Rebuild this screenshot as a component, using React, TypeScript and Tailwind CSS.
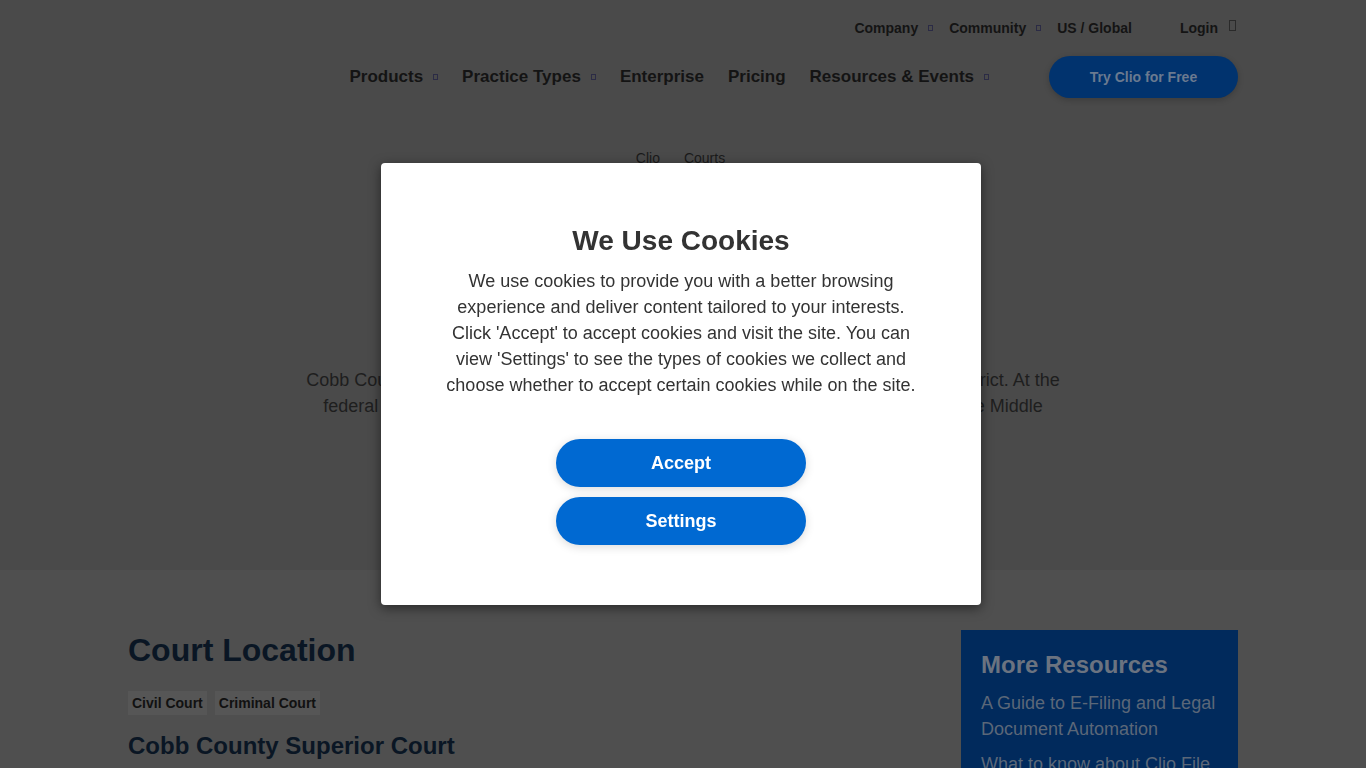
import React from "react";

const font = "font-['Liberation_Sans',Arial,sans-serif]";

function Caret() {
  // missing icon-font glyph, shown as a tiny box
  return <span className="ml-[10px] inline-block h-[6px] w-[5px] border border-[#2b2b45]" />;
}

const mainNav = [
  { label: "Products", caret: true },
  { label: "Practice Types", caret: true },
  { label: "Enterprise", caret: false },
  { label: "Pricing", caret: false },
  { label: "Resources & Events", caret: true },
];

export default function App() {
  return (
    <div className={`${font} min-h-screen bg-[#4f4f4f] text-[#141414]`}>
      {/* Header + hero */}
      <div className="bg-[#4a4a4a]">
        <header className="mx-auto w-[1110px]">
          <div className="flex h-[56px] items-center justify-end text-[14px] font-bold">
            <span className="flex items-center">Company<Caret /></span>
            <span className="ml-[16px] flex items-center">Community<Caret /></span>
            <span className="ml-[16px]">US / Global</span>
            <span className="ml-[48px] mr-[2px] flex items-center">
              Login
              <span className="ml-[11px] mb-[6px] inline-block h-[11px] w-[7px] border border-[#2a2a2a]" />
            </span>
          </div>
          <div className="flex h-[42px] items-center justify-end text-[17px] font-bold">
            <nav className="flex items-center gap-6">
              {mainNav.map((n) => (
                <span key={n.label} className="flex items-center">
                  {n.label}
                  {n.caret && <Caret />}
                </span>
              ))}
            </nav>
            <button className="ml-[60px] h-[42px] w-[189px] rounded-full bg-[#01336e] text-[14px] font-bold text-[#6a7a90] shadow-[0_2px_6px_rgba(0,0,0,0.2)]">
              Try Clio for Free
            </button>
          </div>
        </header>

        <section className="mx-auto w-[760px] pb-[151px] pt-[51px] text-center">
          <div className="mr-[5px] flex justify-center gap-[24px] text-[14px] leading-[18px] text-[#1a1a1a]">
            <span>Clio</span>
            <span>Courts</span>
          </div>
          <h1 className="mt-[90px] text-[40px] font-bold leading-[48px] text-[#141414]">Cobb County Courts</h1>
          <p className="mt-[62px] text-[18px] leading-[26px] text-[#1e1e1e]">
            Cobb County courts operate at the state level as part of the Cobb Judicial Circuit district. At the
            <br />
            federal level, Cobb County cases are held in the United States District Court for the Middle
          </p>
        </section>
      </div>

      {/* Court location */}
      <main className="mx-auto flex w-[1110px] justify-between pt-[60px]">
        <div>
          <h2 className="text-[32px] font-bold leading-[40px] text-[#0a1624]">Court Location</h2>
          <div className="mt-[21px] flex gap-2">
            {["Civil Court", "Criminal Court"].map((t) => (
              <span key={t} className="h-[24px] bg-[#565656] px-[4px] text-[14px] font-bold leading-[24px] text-[#111]">
                {t}
              </span>
            ))}
          </div>
          <h3 className="mt-[16px] text-[24px] font-bold leading-[30px] text-[#0a1624]">Cobb County Superior Court</h3>
        </div>
        <aside className="h-[200px] w-[277px] bg-[#012a5c] px-[20px] pt-[20px]">
          <h4 className="text-[24px] font-bold leading-[30px] text-[#6b7380]">More Resources</h4>
          <ul className="mt-[10px] space-y-[9px] text-[18px] leading-[26px] text-[#5b6778]">
            <li>A Guide to E-Filing and Legal Document Automation</li>
            <li>What to know about Clio File</li>
          </ul>
        </aside>
      </main>

      {/* Cookie dialog */}
      <div className="fixed inset-0 flex items-center justify-center">
        <div className="mr-[4px] flex h-[442px] w-[600px] flex-col items-center rounded-[4px] bg-white px-[60px] pt-[61px] text-center shadow-[0_3px_12px_rgba(0,0,0,0.5)]">
          <h2 className="text-[28px] font-bold leading-[34px] text-[#333]">We Use Cookies</h2>
          <p className="mt-[10px] text-[18px] leading-[26px] text-[#333]">
            We use cookies to provide you with a better browsing experience and deliver content tailored to your
            interests. Click 'Accept' to accept cookies and visit the site. You can view 'Settings' to see the types of
            cookies we collect and choose whether to accept certain cookies while on the site.
          </p>
          <div className="mt-[41px] flex flex-col gap-[10px]">
            <button className="h-[48px] w-[250px] rounded-full bg-[#0069d2] text-[18px] font-bold text-white shadow-[0_2px_10px_rgba(0,0,0,0.15)]">
              Accept
            </button>
            <button className="h-[48px] w-[250px] rounded-full bg-[#0069d2] text-[18px] font-bold text-white shadow-[0_2px_10px_rgba(0,0,0,0.15)]">
              Settings
            </button>
          </div>
        </div>
      </div>
    </div>
  );
}
